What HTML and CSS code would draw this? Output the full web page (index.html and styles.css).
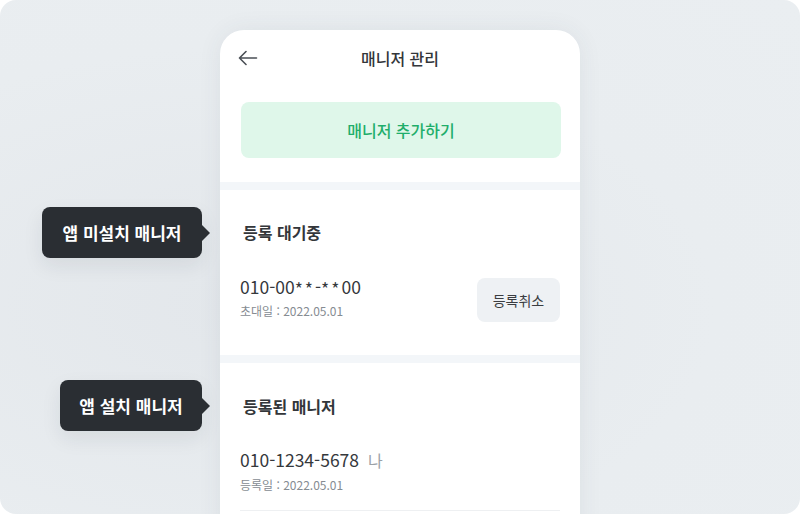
FILE: index.html
```html
<!DOCTYPE html>
<html lang="ko">
<head>
<meta charset="utf-8">
<title>매니저 관리</title>
<link rel="stylesheet" href="styles.css">
</head>
<body>
<div class="stage">
  <div class="tip tip-1">앱 미설치 매니저</div>
  <div class="tip tip-2">앱 설치 매니저</div>
  <div class="phone">
    <header class="bar">
      <svg class="back" width="20" height="16" viewBox="0 0 20 16" fill="none" stroke="#4a4f55" stroke-width="1.6" stroke-linecap="round" stroke-linejoin="round"><path d="M1.5 8H18.5M8 1.5L1.5 8L8 14.5"/></svg>
      <h1 class="title">매니저 관리</h1>
    </header>
    <div class="add-wrap"><button class="add">매니저 추가하기</button></div>
    <div class="band"></div>
    <section class="sec sec-1">
      <h2 class="sec-title">등록 대기중</h2>
      <div class="row">
        <div class="info">
          <div class="num">010-00<span class="mask">**</span>-<span class="mask">**</span>00</div>
          <div class="date">초대일 : 2022.05.01</div>
        </div>
        <button class="cancel">등록취소</button>
      </div>
    </section>
    <div class="band"></div>
    <section class="sec sec-2">
      <h2 class="sec-title">등록된 매니저</h2>
      <div class="row row-line">
        <div class="info">
          <div class="num">010-1234-5678<span class="me">나</span></div>
          <div class="date date-2">등록일 : 2022.05.01</div>
        </div>
      </div>
    </section>
  </div>
</div>
</body>
</html>
```

FILE: styles.css
```css
* { box-sizing: border-box; }
html, body { margin: 0; padding: 0; background: #ffffff; }
body { font-family: "Noto Sans CJK KR", "Noto Sans", sans-serif; }

.stage {
  position: relative;
  width: 800px;
  height: 514px;
  border-radius: 16px;
  background: radial-gradient(ellipse at 30% 60%, #e3e7eb 0%, #e9edf0 60%, #eaeef1 100%);
  overflow: hidden;
  padding: 30px 0 0 220px;
}

.phone {
  width: 360px;
  height: 520px;
  background: #ffffff;
  border-radius: 24px 24px 0 0;
  box-shadow: 0 0 24px rgba(60, 70, 80, 0.07);
  overflow: hidden;
}

.bar {
  position: relative;
  height: 56px;
  display: flex;
  align-items: center;
  justify-content: center;
}
.back { position: absolute; left: 18px; top: 20px; }
.title {
  margin: 0;
  font-size: 16px;
  font-weight: 500;
  color: #33363a;
  line-height: 24px;
}

.add-wrap { padding: 16px 19px 24px 21px; }
.add {
  display: block;
  width: 100%;
  height: 56px;
  border: 0;
  border-radius: 8px;
  background: #dff7ea;
  color: #1fae6b;
  font-family: "Noto Sans CJK KR", sans-serif;
  font-size: 16px;
  font-weight: 500;
}

.band { height: 8px; background: #f3f6f9; }

.sec { padding: 0 20px; }
.sec-1 { padding-top: 30px; padding-bottom: 33px; }
.sec-2 { padding-top: 31px; }

.sec-title {
  margin: 0;
  padding-left: 3px;
  font-size: 16px;
  font-weight: 700;
  line-height: 24px;
  color: #33363a;
}

.row {
  display: flex;
  justify-content: space-between;
  align-items: flex-start;
  margin-top: 31px;
}
.sec-2 .row { margin-top: 30px; }
.row-line { padding-bottom: 16px; border-bottom: 1px solid #eef0f2; }

.num {
  font-size: 17.5px;
  line-height: 24px;
  color: #35383c;
}
.mask { letter-spacing: 2px; position: relative; top: 2px; }
.me { margin-left: 9px; color: #9ba1a7; font-size: 16px; }
.date {
  margin-top: 3px;
  font-size: 12px;
  line-height: 18px;
  color: #868c92;
}
.date-2 { margin-top: 4px; }

.cancel {
  margin-top: 3px;
  width: 83px;
  height: 44px;
  border: 0;
  border-radius: 8px;
  background: #eef1f4;
  color: #3a3d41;
  font-family: "Noto Sans CJK KR", sans-serif;
  font-size: 14px;
  font-weight: 400;
}

.tip {
  position: absolute;
  right: 598px;
  height: 51px;
  display: flex;
  align-items: center;
  justify-content: center;
  background: #2a2e33;
  color: #ffffff;
  border-radius: 8px;
  font-size: 17px;
  font-weight: 700;
  box-shadow: 0 8px 20px rgba(30, 40, 50, 0.08);
}
.tip::after {
  content: "";
  position: absolute;
  right: -8px;
  top: 50%;
  margin-top: -8px;
  border-style: solid;
  border-width: 8px 0 8px 8px;
  border-color: transparent transparent transparent #2a2e33;
}
.tip-1 { top: 207px; width: 160px; }
.tip-2 { top: 380px; width: 142px; }
```
